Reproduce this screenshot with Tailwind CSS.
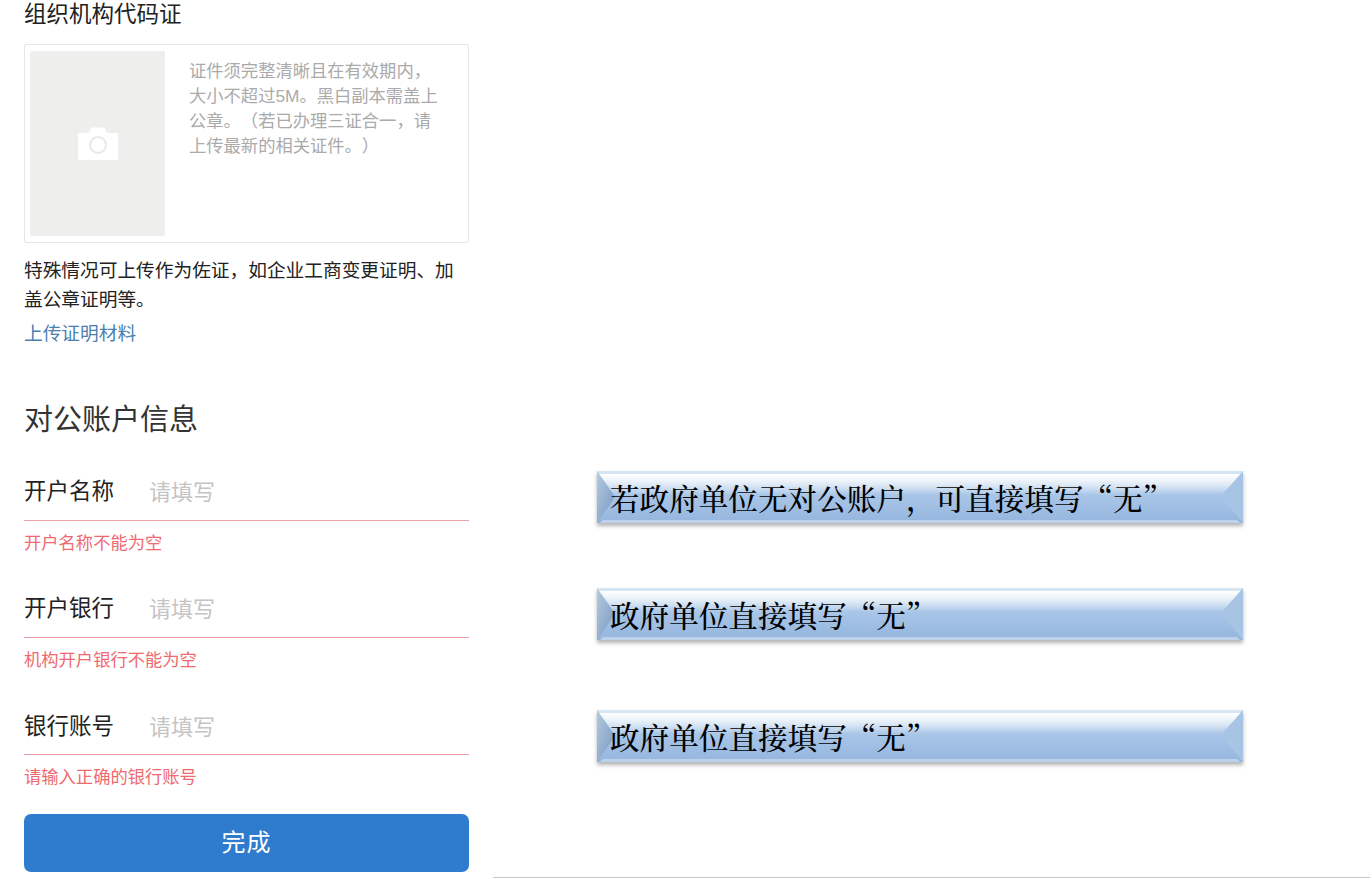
<!DOCTYPE html>
<html lang="zh-CN">
<head>
  <meta charset="UTF-8">
  <title>对公账户信息</title>
  <script src="https://cdn.jsdelivr.net/npm/@tailwindcss/browser@4"></script>
</head>
<body class="bg-white font-['Liberation_Sans','Noto_Sans_CJK_SC',sans-serif] [text-spacing-trim:space-all] overflow-hidden">
  <div class="flex w-[1370px] h-[878px] relative">

    <!-- Left: form column -->
    <div class="w-[445px] ml-[24px] shrink-0">
      <h2 class="text-[22.5px] leading-[30px] text-[#222]">组织机构代码证</h2>

      <div class="mt-[14px] h-[199px] border border-[#e6e6e6] rounded-[2px] pt-[6px] pl-[5px] flex">
        <div class="w-[135px] h-[185px] bg-[#eeeeec] rounded-[2px] flex items-center justify-center">
          <svg class="w-[40px] h-[33px]" viewBox="0 0 40 33">
            <path fill="#fff" d="M0 6h11l2.500-5.500h13L29 6h11v27H0z"/>
            <circle cx="20" cy="18" r="8" fill="none" stroke="#e8e8e6" stroke-width="2"/>
          </svg>
        </div>
        <p class="ml-[24px] w-[260px] mt-[8px] text-[17.3px] leading-[25px] text-[#aaaaaa]">证件须完整清晰且在有效期内，<br>大小不超过5M。黑白副本需盖上<br>公章。（若已办理三证合一，请<br>上传最新的相关证件。）</p>
      </div>

      <p class="mt-[13px] text-[18.7px] leading-[29px] text-[#222]">特殊情况可上传作为佐证，如企业工商变更证明、加<br>盖公章证明等。</p>
      <a class="block mt-[5px] text-[18.7px] leading-[29px] text-[#4a7fb0]">上传证明材料</a>

      <h2 class="mt-[52px] text-[29px] leading-[40px] text-[#333]">对公账户信息</h2>

      <div class="mt-[32px] h-[49px] border-b border-[#eba0a5] flex items-start pt-[2px]">
        <span class="w-[125px] text-[22.5px] leading-[36px] text-[#222]">开户名称</span>
        <span class="text-[22px] leading-[38px] text-[#c4c4c4]">请填写</span>
      </div>
      <p class="mt-[9px] text-[17.3px] leading-[26px] text-[#ee6a70]">开户名称不能为空</p>

      <div class="mt-[2px] h-[80px] border-b border-[#eba0a5] flex items-start pt-[33px]">
        <span class="w-[125px] text-[22.5px] leading-[36px] text-[#222]">开户银行</span>
        <span class="text-[22px] leading-[38px] text-[#c4c4c4]">请填写</span>
      </div>
      <p class="mt-[9px] text-[17.3px] leading-[26px] text-[#ee6a70]">机构开户银行不能为空</p>

      <div class="mt-[2px] h-[80px] border-b border-[#eba0a5] flex items-start pt-[34px]">
        <span class="w-[125px] text-[22.5px] leading-[36px] text-[#222]">银行账号</span>
        <span class="text-[22px] leading-[38px] text-[#c4c4c4]">请填写</span>
      </div>
      <p class="mt-[9px] text-[17.3px] leading-[26px] text-[#ee6a70]">请输入正确的银行账号</p>

      <button class="block mt-[24px] w-full h-[58px] bg-[#2f7bcd] rounded-[7px] text-white text-[24px] tracking-[1px]">完成</button>
    </div>

    <!-- Right: bevelled callouts -->
    <div class="ml-[128px] w-[646px] pt-[471px] flex flex-col">
      <div class="relative h-[52px] bg-gradient-to-b from-[#d9e7f3] via-[#a9c6e8] via-45% to-[#95b5de] shadow-[0_3px_4px_rgba(0,0,0,0.3)] flex items-center pl-[13px]">
        <svg class="absolute inset-0 w-full h-full" viewBox="0 0 646 52" preserveAspectRatio="none">
          <defs>
            <linearGradient id="sheen" x1="0" y1="0" x2="0" y2="1">
              <stop offset="0" stop-color="#ffffff"/>
              <stop offset="1" stop-color="#ffffff" stop-opacity="0"/>
            </linearGradient>
            <linearGradient id="leftEdge" x1="0" y1="0" x2="1" y2="1">
              <stop offset="0" stop-color="#b4cade"/>
              <stop offset="1" stop-color="#7596c2"/>
            </linearGradient>
          </defs>
          <polygon points="2,3 644,3 624,24 18,24" fill="url(#sheen)"/>
          <polygon points="3,52 643,52 640,49 6,49" fill="#bcd2ea"/>
          <polygon points="0,0 18,26 0,52" fill="url(#leftEdge)"/>
          <polygon points="646,0 624,26 646,52" fill="#a8c4e4"/>
        </svg>
        <span class="relative font-['Noto_Serif_CJK_SC','Noto_Sans_CJK_SC',serif] font-medium text-[29.6px] text-black">若政府单位无对公账户，可直接填写“无”</span>
      </div>
      <div class="relative mt-[65px] h-[52px] bg-gradient-to-b from-[#d9e7f3] via-[#a9c6e8] via-45% to-[#95b5de] shadow-[0_3px_4px_rgba(0,0,0,0.3)] flex items-center pl-[13px]">
        <svg class="absolute inset-0 w-full h-full" viewBox="0 0 646 52" preserveAspectRatio="none">
          <polygon points="2,3 644,3 624,24 18,24" fill="url(#sheen)"/>
          <polygon points="3,52 643,52 640,49 6,49" fill="#bcd2ea"/>
          <polygon points="0,0 18,26 0,52" fill="url(#leftEdge)"/>
          <polygon points="646,0 624,26 646,52" fill="#a8c4e4"/>
        </svg>
        <span class="relative font-['Noto_Serif_CJK_SC','Noto_Sans_CJK_SC',serif] font-medium text-[29.6px] text-black">政府单位直接填写“无”</span>
      </div>
      <div class="relative mt-[70px] h-[52px] bg-gradient-to-b from-[#d9e7f3] via-[#a9c6e8] via-45% to-[#95b5de] shadow-[0_3px_4px_rgba(0,0,0,0.3)] flex items-center pl-[13px]">
        <svg class="absolute inset-0 w-full h-full" viewBox="0 0 646 52" preserveAspectRatio="none">
          <polygon points="2,3 644,3 624,24 18,24" fill="url(#sheen)"/>
          <polygon points="3,52 643,52 640,49 6,49" fill="#bcd2ea"/>
          <polygon points="0,0 18,26 0,52" fill="url(#leftEdge)"/>
          <polygon points="646,0 624,26 646,52" fill="#a8c4e4"/>
        </svg>
        <span class="relative font-['Noto_Serif_CJK_SC','Noto_Sans_CJK_SC',serif] font-medium text-[29.6px] text-black">政府单位直接填写“无”</span>
      </div>
    </div>

    <div class="absolute left-[493px] right-0 bottom-0 h-px bg-[#c8c8c8]"></div>
  </div>
</body>
</html>
